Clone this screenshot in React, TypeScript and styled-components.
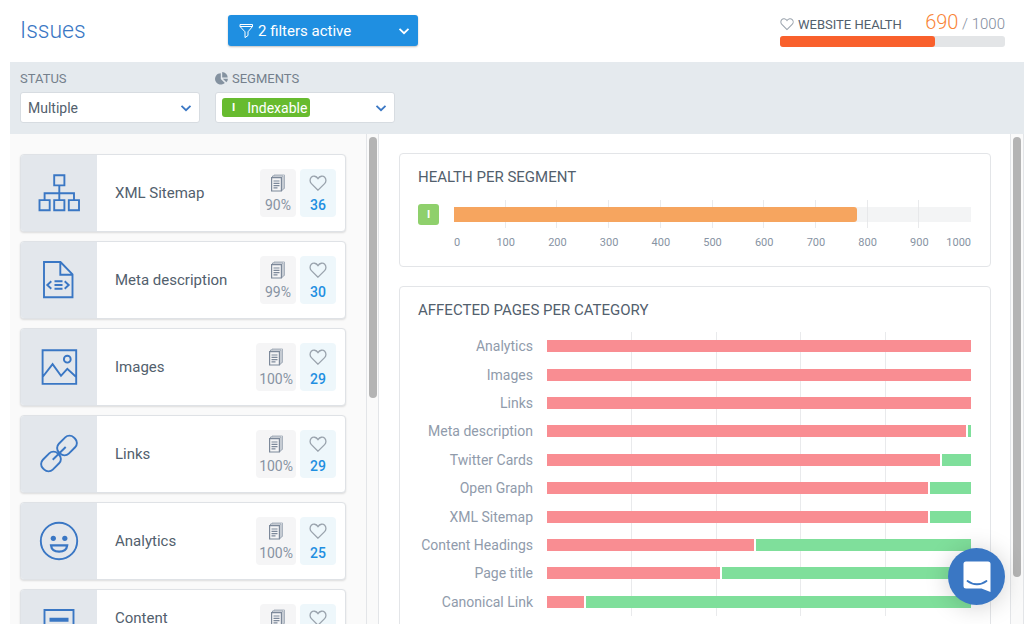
import React from 'react';
import styled, { createGlobalStyle } from 'styled-components';

const color = {
  text: '#52606d',
  muted: '#8793a3',
  blue: '#3a77c4',
  accent: '#1f8fe1',
  band: '#e5eaee',
  border: '#e3e5e8',
};

const GlobalStyle = createGlobalStyle`
  *, *::before, *::after { box-sizing: border-box; }
  html, body { margin: 0; background: #fff; }
  body { font-family: Roboto, "Liberation Sans", sans-serif; font-size: 15px; color: ${color.text}; }
  button, select { font-family: inherit; }
`;

const Page = styled.div`
  display: flex;
  flex-direction: column;
  height: 100vh;
  overflow: hidden;
`;

const Header = styled.header`
  display: flex;
  align-items: center;
  flex: none;
  height: 62px;
  padding: 0 19px 1px 20px;
`;

const Title = styled.h1`
  width: 208px;
  margin: 0;
  font-size: 23px;
  font-weight: 300;
  line-height: 32px;
  color: ${color.blue};
`;

const FilterButton = styled.button`
  display: flex;
  align-items: center;
  gap: 4px;
  width: 190px;
  height: 31px;
  padding: 0 8px 0 11px;
  border: 0;
  border-radius: 3px;
  background: ${color.accent};
  box-shadow: 0 1px 2px rgba(0, 0, 0, 0.25);
  color: #fff;
  font-size: 15px;
  text-align: left;
`;

const Grow = styled.span`
  flex: 1;
`;

const Health = styled.section`
  width: 225px;
  margin: 0 0 3px auto;
`;

const HealthText = styled.div`
  display: flex;
  align-items: baseline;
  height: 25px;
  line-height: 22px;
  font-size: 13px;
  white-space: nowrap;

  svg { margin-right: 4px; align-self: center; }
`;

const HealthScore = styled.span`
  margin-left: auto;
  font-size: 15px;
  font-weight: 300;
  color: #7f8b9c;

  b { font-size: 20px; font-weight: 300; color: #f98436; }
`;

const HealthTrack = styled.div`
  height: 11px;
  border-radius: 3px;
  background: #e3e5e7;
`;

const HealthFill = styled.div`
  height: 100%;
  border-radius: 3px;
  background: #f9602c;
`;

const Filters = styled.form`
  display: flex;
  flex: none;
  gap: 15px;
  height: 72px;
  margin-left: 10px;
  padding: 7px 10px;
  background: ${color.band};
`;

const Field = styled.div`
  width: 180px;
`;

const FieldLabel = styled.label`
  display: flex;
  align-items: center;
  gap: 4px;
  height: 19px;
  margin-bottom: 4px;
  font-size: 13px;
  color: #74808c;
`;

const Control = styled.div`
  display: grid;
  align-items: center;

  > * { grid-area: 1 / 1; }
  > svg { justify-self: end; margin-right: 8px; pointer-events: none; }
`;

const fieldBox = `
  width: 100%;
  height: 31px;
  border: 1px solid #d7dce1;
  border-radius: 3px;
  background: #fff;
`;

const Select = styled.select`
  ${fieldBox}
  appearance: none;
  padding: 0 7px;
  font-size: 14px;
  color: ${color.text};
`;

const SegmentButton = styled.button`
  ${fieldBox}
  display: flex;
  align-items: center;
  padding: 0 6px;
`;

const Tag = styled.span`
  display: flex;
  align-items: center;
  gap: 12px;
  height: 19px;
  padding: 0 3px 0 10px;
  border-radius: 3px;
  background: #67bb2f;
  color: #fff;
  font-size: 14px;

  b { font-weight: 700; font-size: 11px; }
`;

const Body = styled.main`
  display: grid;
  grid-template-columns: 356px 13px minmax(0, 1fr) 14px;
  flex: 1;
  min-height: 0;
  margin-left: 10px;
`;

const IssueList = styled.nav`
  display: flex;
  flex-direction: column;
  gap: 9px;
  padding: 20px 20px 0 10px;
  overflow: hidden;
  background: #fafafa;
`;

const ScrollTrack = styled.div`
  padding: 3px 2px;
  border-left: 1px solid ${color.border};
  border-right: 1px solid ${color.border};
  background: #fafafa;
`;

const ScrollThumb = styled.div<{ $height: string }>`
  width: 8px;
  height: ${(p) => p.$height};
  border-radius: 4px;
  background: #b4b4b4;
`;

const Issue = styled.a`
  display: flex;
  align-items: center;
  flex: none;
  height: 78px;
  padding-right: 9px;
  border: 1px solid #dfe2e6;
  border-radius: 4px;
  background: #fff;
  box-shadow: 0 1px 2px rgba(0, 0, 0, 0.12);
  overflow: hidden;
  color: inherit;
  text-decoration: none;
`;

const IssueIcon = styled.span`
  display: grid;
  place-items: center;
  align-self: stretch;
  width: 76px;
  background: #e3e7ec;
`;

const IssueName = styled.span`
  width: 115px;
  margin: 0 auto 0 18px;
  line-height: 20px;
`;

const Stat = styled.span<{ $tone: 'pages' | 'health' }>`
  display: flex;
  flex-direction: column;
  align-items: center;
  gap: 3px;
  min-width: 36px;
  height: 48px;
  margin-left: 4px;
  padding: 5px 3px 0;
  border-radius: 4px;
  background: ${(p) => (p.$tone === 'health' ? '#eef7fb' : '#f5f5f6')};
  color: ${(p) => (p.$tone === 'health' ? color.accent : color.muted)};
  font-size: 14px;
  font-weight: ${(p) => (p.$tone === 'health' ? 500 : 400)};
  line-height: 20px;
`;

const Dashboard = styled.div`
  display: flex;
  flex-direction: column;
  gap: 19px;
  padding: 19px 19px 0 20px;
  overflow: hidden;
`;

const Panel = styled.section`
  flex: none;
  padding: 13px 19px 15px 18px;
  border: 1px solid ${color.border};
  border-radius: 4px;
`;

const PanelTitle = styled.h2`
  margin: 0;
  font-size: 15px;
  font-weight: 400;
  line-height: 20px;
`;

const SegmentChart = styled.div`
  display: grid;
  grid-template-columns: 21px minmax(0, 1fr);
  column-gap: 15px;
  align-items: center;
  margin-top: 13px;
`;

const SegmentBadge = styled.span`
  display: grid;
  place-items: center;
  height: 21px;
  border-radius: 3px;
  background: #8fd06c;
  color: #fff;
  font-size: 11px;
  font-weight: 700;
`;

const SegmentPlot = styled.div`
  display: grid;
  align-items: center;
  height: 28px;

  > * { grid-area: 1 / 1; }
`;

const GridLines = styled.div<{ $count: number }>`
  display: grid;
  grid-template-columns: repeat(${(p) => p.$count}, 1fr);
  align-self: stretch;

  span { border-right: 1px solid #e9eaec; }
  span:last-child { border: 0; }
`;

const SegmentTrack = styled.div`
  height: 15px;
  background: rgba(228, 230, 232, 0.45);
`;

const SegmentFill = styled.div`
  height: 100%;
  border-radius: 0 3px 3px 0;
  background: #f6a55f;
`;

const Ticks = styled.div`
  display: grid;
  grid-column: 2;
  grid-template-columns: 1fr repeat(9, 2fr) 1fr;
  padding-top: 7px;
  font-size: 11px;
  line-height: 16px;
  color: ${color.muted};
  text-align: center;

  span { min-width: 0; }
  span:first-child { text-align: left; }
  span:last-child { justify-self: end; }
`;

const CategoryChart = styled.div`
  display: grid;
  grid-template-columns: 115px minmax(0, 1fr);
  grid-template-rows: repeat(10, 1fr);
  column-gap: 14px;
  align-items: center;
  height: 284px;
  margin-top: 12px;

  ${GridLines} { grid-area: 1 / 2 / -1 / 3; }
`;

const CategoryName = styled.span<{ $row: number }>`
  grid-area: ${(p) => p.$row} / 1;
  font-size: 14px;
  line-height: 20px;
  color: #909bab;
  text-align: right;
  white-space: nowrap;
`;

const CategoryBar = styled.div<{ $row: number }>`
  display: flex;
  grid-area: ${(p) => p.$row} / 2;
  gap: 2px;
  height: 12px;
`;

const Portion = styled.div<{ $kind: 'affected' | 'clean' }>`
  background: ${(p) => (p.$kind === 'affected' ? '#f98d92' : '#7fdf9b')};
`;

const ChatButton = styled.button`
  position: fixed;
  right: 19px;
  bottom: 19px;
  display: grid;
  place-items: center;
  width: 57px;
  height: 57px;
  padding: 0;
  border: 0;
  border-radius: 50%;
  background: ${color.blue};
  box-shadow: 0 2px 24px rgba(0, 0, 0, 0.18);
`;

const Chevron = ({ stroke }: { stroke: string }) => (
  <svg width="12" height="12" viewBox="0 0 12 12" fill="none" stroke={stroke} strokeWidth="1.8" aria-hidden="true">
    <path d="M1.5 3.8 6 8.2l4.5-4.4" />
  </svg>
);

const Funnel = () => (
  <svg width="15" height="16" viewBox="0 0 15 16" fill="none" stroke="#fff" strokeWidth="1" aria-hidden="true">
    <path d="M1 1.5h12.5v2L9 8.8v3.7L6 14.6V8.8L1 3.5zM1 3.5h12.5" />
  </svg>
);

const Heart = ({ size }: { size: number }) => (
  <svg width={size} height={size} viewBox="0 0 18 18" fill="none" stroke="#9aa3ad" strokeWidth="1.3" aria-hidden="true">
    <path d="M9 16.2 2.4 9.6C.7 7.9.6 5 2.300 3.300 4 1.600 7.200 1.800 9 4.600c1.800-2.800 5-3 6.700-1.300 1.700 1.700 1.600 4.600-.1 6.300z" />
  </svg>
);

const Pie = () => (
  <svg width="13" height="13" viewBox="0 0 13 13" fill="#8492a0" aria-hidden="true">
    <path d="M5.8 1.2v5.700l4 4A5.700 5.700 0 1 1 5.800 1.200z" />
    <path d="M7.2 0a5.600 5.600 0 0 1 5.500 5.500H7.200z" />
    <path d="M7.8 6.700h5.100a5.500 5.500 0 0 1-1.500 3.600z" />
  </svg>
);

const Pages = () => (
  <svg width="16" height="18" viewBox="0 0 16 18" fill="none" stroke="#7d899a" aria-hidden="true">
    <path d="M4 2.200V1h10.500v13.500h-1" stroke="#aab3be" />
    <path d="M2.500 3V2h10.500v14h-1" stroke="#97a2b0" />
    <path d="M1.600 3.600h9.800v13.400H1.600z" strokeWidth="1.200" />
    <path d="M3.500 7h6M3.500 9.300h6M3.500 11.600h6M3.500 13.900h4" strokeWidth="1.200" />
  </svg>
);

const icons: Record<string, React.ReactNode> = {
  sitemap: (
    <path d="M16.200 3.200h10.200v10.200H16.200zM1.500 28.100h10.200v10.200H1.500zM16.200 28.100h10.200v10.200H16.200zM30.800 28.100H41v10.200H30.800zM21.300 13.400v14.700M6.600 28.100v-6.800H36v6.800" />
  ),
  meta: (
    <path d="M6 3h16.500L34.500 15.300v23H6zM22.300 3v12.700h12.200M13.300 22.300l-4 3.700 4 3.700M26.700 22.300l4 3.700-4 3.700M16.500 22.200h8M16.500 26h8M16.500 29.800h8" />
  ),
  image: (
    <>
      <path d="M4.600 4.300h33.600v33.600H4.600zM4.600 31l10-12.800L23 29.800l6.300-7 8.900 8.200" />
      <circle cx="29.300" cy="13.200" r="3.400" />
    </>
  ),
  link: (
    <>
      <rect x="-10.5" y="-7" width="21" height="14" rx="6" transform="translate(29 12.500) rotate(-45)" />
      <rect x="-10.5" y="-7" width="21" height="14" rx="6" transform="translate(13 28.500) rotate(-45)" />
      <path d="M14.700 26.700 27.700 14" />
    </>
  ),
  smile: (
    <>
      <circle cx="21" cy="21" r="18.200" />
      <path d="M13 25.400h16.200c-.5 4.200-4 6.300-8.100 6.300s-7.600-2.100-8.100-6.300z" strokeWidth="2.200" />
      <circle cx="15.300" cy="18.300" r="2.600" fill={color.blue} stroke="none" />
      <circle cx="26.800" cy="18.300" r="2.600" fill={color.blue} stroke="none" />
    </>
  ),
  content: (
    <>
      <path d="M6.500 3h29v36h-29zM11.500 20.500h19M11.500 26h19M11.500 31.500h12" />
      <path d="M11.500 12.800h19" strokeWidth="4" />
    </>
  ),
};

const issues = [
  { icon: 'sitemap', name: 'XML Sitemap', pages: 90, health: 36 },
  { icon: 'meta', name: 'Meta description', pages: 99, health: 30 },
  { icon: 'image', name: 'Images', pages: 100, health: 29 },
  { icon: 'link', name: 'Links', pages: 100, health: 29 },
  { icon: 'smile', name: 'Analytics', pages: 100, health: 25 },
  { icon: 'content', name: 'Content Headings', pages: 49, health: 21 },
];

const categories: [string, number][] = [
  ['Analytics', 100],
  ['Images', 100],
  ['Links', 100],
  ['Meta description', 99.2],
  ['Twitter Cards', 93.2],
  ['Open Graph', 90.2],
  ['XML Sitemap', 90.2],
  ['Content Headings', 49],
  ['Page title', 41],
  ['Canonical Link', 8.7],
];

const ticks = [0, 100, 200, 300, 400, 500, 600, 700, 800, 900, 1000];

const Lines = ({ count }: { count: number }) => (
  <GridLines $count={count} aria-hidden="true">
    {Array.from({ length: count }, (_, i) => (
      <span key={i} />
    ))}
  </GridLines>
);

export default function App() {
  return (
    <Page>
      <GlobalStyle />
      <Header>
        <Title>Issues</Title>
        <FilterButton type="button" aria-expanded="true">
          <Funnel />
          <Grow>2 filters active</Grow>
          <Chevron stroke="#fff" />
        </FilterButton>
        <Health>
          <HealthText>
            <Heart size={14} />
            <span>WEBSITE HEALTH</span>
            <HealthScore>
              <b>690</b> / 1000
            </HealthScore>
          </HealthText>
          <HealthTrack>
            <HealthFill style={{ width: '69%' }} />
          </HealthTrack>
        </Health>
      </Header>

      <Filters>
        <Field>
          <FieldLabel htmlFor="status">STATUS</FieldLabel>
          <Control>
            <Select id="status" defaultValue="multiple">
              <option value="multiple">Multiple</option>
            </Select>
            <Chevron stroke={color.blue} />
          </Control>
        </Field>
        <Field>
          <FieldLabel htmlFor="segments">
            <Pie /> SEGMENTS
          </FieldLabel>
          <Control>
            <SegmentButton id="segments" type="button" aria-haspopup="listbox">
              <Tag>
                <b>I</b> Indexable
              </Tag>
            </SegmentButton>
            <Chevron stroke={color.blue} />
          </Control>
        </Field>
      </Filters>

      <Body>
        <IssueList>
          {issues.map((issue) => (
            <Issue key={issue.name} href={`#${issue.icon}`}>
              <IssueIcon>
                <svg width="42" height="42" viewBox="0 0 42 42" fill="none" stroke={color.blue} strokeWidth="1.9" aria-hidden="true">
                  {icons[issue.icon]}
                </svg>
              </IssueIcon>
              <IssueName>{issue.name}</IssueName>
              <Stat $tone="pages">
                <Pages />
                {issue.pages}%
              </Stat>
              <Stat $tone="health">
                <Heart size={18} />
                {issue.health}
              </Stat>
            </Issue>
          ))}
        </IssueList>
        <ScrollTrack>
          <ScrollThumb $height="54%" />
        </ScrollTrack>
        <Dashboard>
          <Panel>
            <PanelTitle>HEALTH PER SEGMENT</PanelTitle>
            <SegmentChart>
              <SegmentBadge>I</SegmentBadge>
              <SegmentPlot>
                <Lines count={10} />
                <SegmentTrack>
                  <SegmentFill style={{ width: '78%' }} />
                </SegmentTrack>
              </SegmentPlot>
              <Ticks>
                {ticks.map((t) => (
                  <span key={t}>{t}</span>
                ))}
              </Ticks>
            </SegmentChart>
          </Panel>
          <Panel>
            <PanelTitle>AFFECTED PAGES PER CATEGORY</PanelTitle>
            <CategoryChart>
              <Lines count={5} />
              {categories.map(([name, share], i) => (
                <React.Fragment key={name}>
                  <CategoryName $row={i + 1}>{name}</CategoryName>
                  <CategoryBar $row={i + 1}>
                    <Portion $kind="affected" style={{ flexGrow: share }} />
                    {share < 100 && <Portion $kind="clean" style={{ flexGrow: 100 - share }} />}
                  </CategoryBar>
                </React.Fragment>
              ))}
            </CategoryChart>
          </Panel>
        </Dashboard>
        <ScrollTrack>
          <ScrollThumb $height="91%" />
        </ScrollTrack>
      </Body>

      <ChatButton type="button" aria-label="Open chat">
        <svg width="28" height="31" viewBox="0 0 28 31" aria-hidden="true">
          <path d="M3 .5h22A2.500 2.500 0 0 1 27.500 3v28l-9-3.500H3A2.500 2.500 0 0 1 .5 25V3A2.500 2.500 0 0 1 3 .5z" fill="#fff" />
          <path d="M4.500 20c5.500 4.300 13.500 4.300 19 0" fill="none" stroke={color.blue} strokeWidth="1.800" strokeLinecap="round" />
        </svg>
      </ChatButton>
    </Page>
  );
}
